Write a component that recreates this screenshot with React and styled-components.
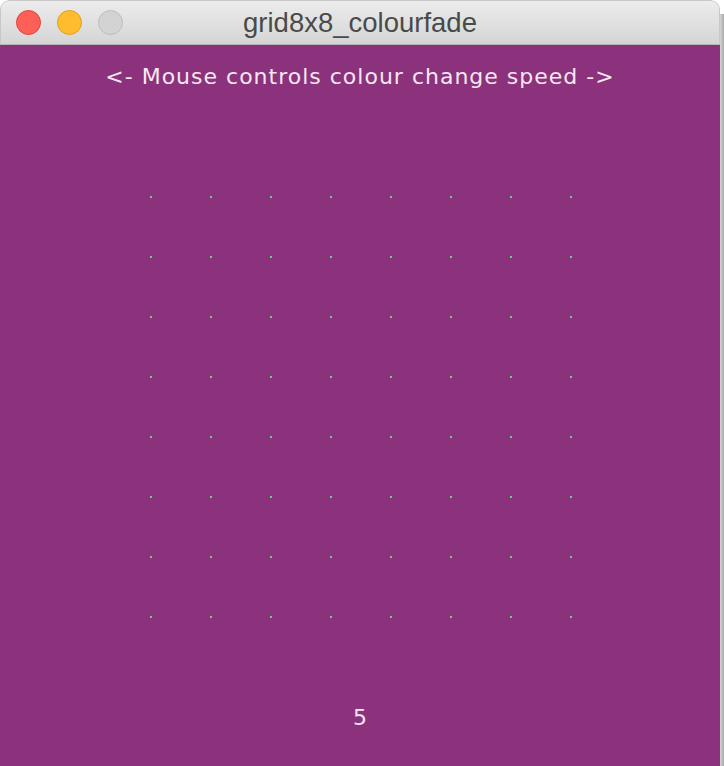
import React from "react";
import styled, { createGlobalStyle } from "styled-components";

const GlobalStyle = createGlobalStyle`
  html, body {
    margin: 0;
    padding: 0;
    background: #ffffff;
    overflow: hidden;
  }
  #root {
    width: 724px;
    height: 766px;
  }
`;

const Desktop = styled.div`
  display: flex;
  width: 724px;
  height: 766px;
  background: #ffffff;
`;

const Window = styled.div`
  display: flex;
  flex-direction: column;
  width: 720px;
  height: 766px;
  overflow: hidden;
  border-radius: 9px 9px 0 0;
`;

const BehindEdge = styled.div`
  flex: 1;
  margin-top: 14px;
  background: linear-gradient(to right, #d4d4d4, #a9a9a9);
`;

const TitleBar = styled.div`
  position: relative;
  display: flex;
  align-items: center;
  justify-content: center;
  height: 45px;
  flex-shrink: 0;
  background: linear-gradient(to bottom, #ececec, #d5d5d5);
  border: 1px solid #c8c8c8;
  border-bottom-color: #b4b4b4;
  border-radius: 9px 9px 0 0;
  box-sizing: border-box;
`;

const Lights = styled.div`
  position: absolute;
  left: 15px;
  top: 9px;
  display: flex;
  gap: 16px;
`;

const Light = styled.span`
  width: 25px;
  height: 25px;
  border-radius: 50%;
  background: ${(p) => p.$fill};
  border: 1px solid ${(p) => p.$edge};
  box-sizing: border-box;
`;

const Title = styled.div`
  font-family: "Liberation Sans", Arial, sans-serif;
  font-size: 27.5px;
  color: #4a4a4a;
  margin-top: 1px;
`;

const Canvas = styled.div`
  flex: 1;
  display: flex;
  flex-direction: column;
  background: #8c327c;
  font-family: "DejaVu Sans", sans-serif;
  color: #f6e8f2;
`;

const Heading = styled.div`
  text-align: center;
  font-size: 22px;
  letter-spacing: 1px;
  margin-top: 18px;
  height: 28px;
  line-height: 28px;
`;

const DotGrid = styled.div`
  display: grid;
  grid-template-columns: repeat(8, 2px);
  grid-auto-rows: 2px;
  column-gap: 58px;
  row-gap: 58px;
  margin-top: 105px;
  margin-left: 150px;
`;

const Dot = styled.span`
  width: 2px;
  height: 2px;
  background: #63cf8a;
`;

const Speed = styled.div`
  text-align: center;
  font-size: 22px;
  margin-top: 87px;
`;

const lights = [
  { fill: "#fe5f57", edge: "#e0443e" },
  { fill: "#febc2e", edge: "#dea123" },
  { fill: "#d3d3d3", edge: "#bdbdbd" },
];

const App = () => {
  const dots = Array.from({ length: 64 }, (_, i) => i);
  return (
    <>
      <GlobalStyle />
      <Desktop>
        <Window>
          <TitleBar>
            <Lights>
              {lights.map((l, i) => (
                <Light key={i} $fill={l.fill} $edge={l.edge} />
              ))}
            </Lights>
            <Title>grid8x8_colourfade</Title>
          </TitleBar>
          <Canvas>
            <Heading>&lt;- Mouse controls colour change speed -&gt;</Heading>
            <DotGrid>
              {dots.map((d) => (
                <Dot key={d} />
              ))}
            </DotGrid>
            <Speed>5</Speed>
          </Canvas>
        </Window>
        <BehindEdge />
      </Desktop>
    </>
  );
};

export default App;
